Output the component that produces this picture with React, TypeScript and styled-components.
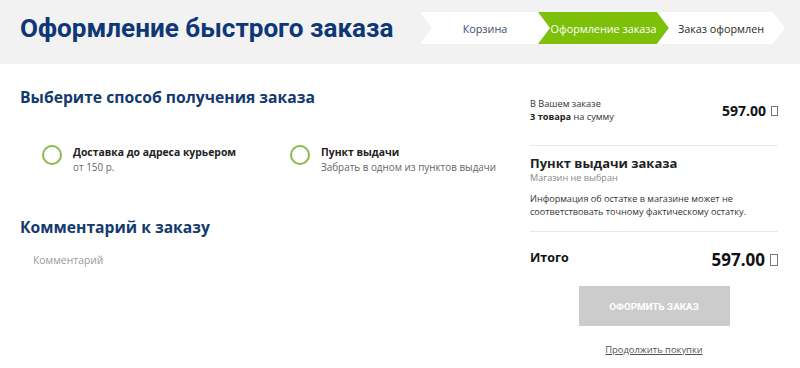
import React from "react";
import styled, { createGlobalStyle } from "styled-components";

const Global = createGlobalStyle`
  html, body { margin: 0; padding: 0; background: #fff; }
  body { font-family: "Open Sans", "Liberation Sans", sans-serif; color: #222; }
  * { box-sizing: border-box; }
`;

const Page = styled.div`
  width: 800px;
  height: 368px;
  overflow: hidden;
  background: #fff;
`;

const Header = styled.header`
  height: 64px;
  background: #f2f2f2;
  display: flex;
  align-items: center;
  justify-content: space-between;
  padding: 0 15px 8px 20px;
`;

const Title = styled.h1`
  margin: 0;
  font-family: Roboto, "Liberation Sans", sans-serif;
  font-weight: 700;
  font-size: 26.1px;
  line-height: 32px;
  color: #0d3776;
`;

const Steps = styled.nav`
  display: flex;
  flex: none;
  height: 32px;
`;

const Step = styled.div<{ $active?: boolean; $first?: boolean; $w: number; $color: string }>`
  width: ${(p) => p.$w}px;
  flex: none;
  height: 32px;
  margin-left: ${(p) => (p.$first ? 0 : -12)}px;
  padding: 0 12px;
  display: flex;
  align-items: center;
  justify-content: center;
  background: ${(p) => (p.$active ? "#7cc00a" : "#fff")};
  color: ${(p) => (p.$active ? "#fff" : p.$color)};
  font-size: 10.8px;
  clip-path: polygon(0 0, calc(100% - 12px) 0, 100% 50%, calc(100% - 12px) 100%, 0 100%, 12px 50%);
  white-space: nowrap;
`;

const Main = styled.main`
  display: flex;
  padding: 0 22px 0 20px;
`;

const Left = styled.section`
  flex: 1;
  min-width: 0;
  padding-top: 21px;
`;

const Right = styled.aside`
  width: 248px;
  flex: none;
  padding-top: 33px;
`;

const SectionTitle = styled.h2<{ $mt?: number }>`
  margin: ${(p) => p.$mt ?? 0}px 0 0;
  font-size: 15.7px;
  line-height: 24px;
  font-weight: 700;
  color: #133a6e;
`;

const Options = styled.div`
  display: flex;
  padding: 36px 0 0 22px;
`;

const Option = styled.label`
  width: 248px;
  flex: none;
  display: flex;
  align-items: flex-start;
  gap: 11px;
`;

const Radio = styled.span`
  width: 20px;
  height: 20px;
  border-radius: 50%;
  border: 2.5px solid #86bb46;
  flex: none;
`;

const OptText = styled.div`
  display: flex;
  flex-direction: column;
`;

const OptName = styled.span`
  font-size: 10.4px;
  line-height: 15px;
  font-weight: 700;
  color: #222;
`;

const OptSub = styled.span`
  font-size: 9.9px;
  line-height: 15px;
  color: #666;
`;

const Comment = styled.div`
  padding: 13px 0 0 13px;
  font-size: 10.4px;
  line-height: 16px;
  color: #9a9a9a;
`;

const SumRow = styled.div`
  display: flex;
  justify-content: space-between;
  align-items: center;
  padding-bottom: 22px;
  border-bottom: 1px solid #e6e6e6;
`;

const Small = styled.div`
  font-size: 9.2px;
  line-height: 13px;
  color: #333;
  b { font-weight: 700; color: #222; }
`;

const Price = styled.div<{ $size: number }>`
  font-size: ${(p) => p.$size}px;
  line-height: ${(p) => Math.round(p.$size * 1.35)}px;
  font-weight: 700;
  color: #111;
  display: flex;
  align-items: center;
  gap: 5px;
`;

const Tofu = styled.span<{ $h: number }>`
  display: inline-block;
  width: ${(p) => Math.round(p.$h * 0.65)}px;
  height: ${(p) => p.$h}px;
  border: 1px solid #777;
  margin-top: 1px;
`;

const Pickup = styled.div`
  padding: 9px 0 13px;
  border-bottom: 1px solid #e6e6e6;
`;

const PickupTitle = styled.div`
  font-size: 13px;
  line-height: 16px;
  font-weight: 700;
  color: #222;
`;

const Muted = styled.div`
  font-size: 9.1px;
  line-height: 13px;
  color: #888;
`;

const Info = styled.div`
  margin-top: 8px;
  font-size: 9.1px;
  line-height: 13px;
  color: #333;
`;

const TotalRow = styled.div`
  display: flex;
  justify-content: space-between;
  align-items: center;
  padding-top: 16px;
`;

const TotalLabel = styled.div`
  font-size: 12.5px;
  font-weight: 700;
  color: #111;
  margin-top: -5px;
`;

const Submit = styled.button`
  display: block;
  margin: 15px auto 0;
  width: 151px;
  height: 40px;
  border: none;
  background: #cccccc;
  color: #fff;
  font-family: Roboto, "Liberation Sans", sans-serif;
  font-weight: 700;
  font-size: 9.8px;
  cursor: default;
`;

const Continue = styled.a`
  display: block;
  margin-top: 17px;
  text-align: center;
  font-size: 9.4px;
  line-height: 14px;
  color: #555;
  text-decoration: underline;
`;

export default function App() {
  return (
    <Page>
      <Global />
      <Header>
        <Title>Оформление быстрого заказа</Title>
        <Steps>
          <Step $first $w={130} $color="#3b4c6e">Корзина</Step>
          <Step $active $w={131} $color="#fff">Оформление заказа</Step>
          <Step $w={128} $color="#2a2a2a">Заказ оформлен</Step>
        </Steps>
      </Header>
      <Main>
        <Left>
          <SectionTitle>Выберите способ получения заказа</SectionTitle>
          <Options>
            <Option>
              <Radio />
              <OptText>
                <OptName>Доставка до адреса курьером</OptName>
                <OptSub>от 150 р.</OptSub>
              </OptText>
            </Option>
            <Option>
              <Radio />
              <OptText>
                <OptName>Пункт выдачи</OptName>
                <OptSub>Забрать в одном из пунктов выдачи</OptSub>
              </OptText>
            </Option>
          </Options>
          <SectionTitle $mt={40}>Комментарий к заказу</SectionTitle>
          <Comment>Комментарий</Comment>
        </Left>
        <Right>
          <SumRow>
            <Small>
              В Вашем заказе
              <br />
              <b>3 товара</b> на сумму
            </Small>
            <Price $size={14}>
              597.00 <Tofu $h={10} />
            </Price>
          </SumRow>
          <Pickup>
            <PickupTitle>Пункт выдачи заказа</PickupTitle>
            <Muted>Магазин не выбран</Muted>
            <Info>
              Информация об остатке в магазине может не
              <br />
              соответствовать точному фактическому остатку.
            </Info>
          </Pickup>
          <TotalRow>
            <TotalLabel>Итого</TotalLabel>
            <Price $size={17}>
              597.00 <Tofu $h={12} />
            </Price>
          </TotalRow>
          <Submit>ОФОРМИТЬ ЗАКАЗ</Submit>
          <Continue>Продолжить покупки</Continue>
        </Right>
      </Main>
    </Page>
  );
}
